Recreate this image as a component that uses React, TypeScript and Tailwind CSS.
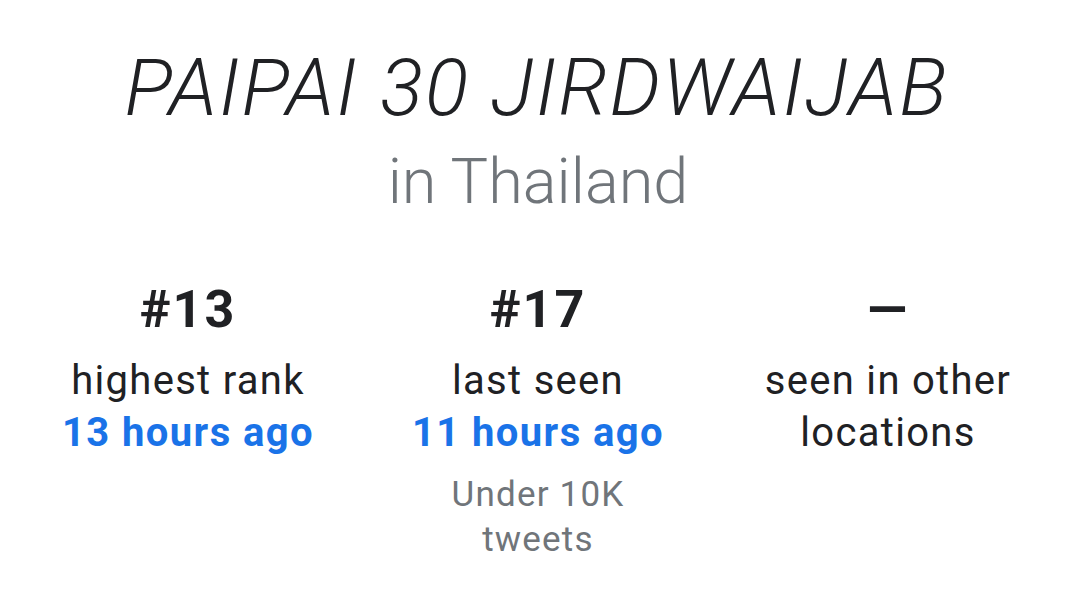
export default function App() {
  const stats = [
    { rank: "#13", label: "highest rank", when: "13 hours ago", note: "" },
    { rank: "#17", label: "last seen", when: "11 hours ago", note: "Under 10K tweets" },
    { rank: "—", label: "seen in other locations", when: "", note: "" },
  ];

  return (
    <main
      className="min-h-[590px] w-full bg-white pt-10 text-center text-[#202124]"
      style={{ fontFamily: "Roboto, 'Noto Sans', sans-serif" }}
    >
      {/* trend title */}
      <h1 className="pr-[3px] text-[80px] leading-[96px] font-light italic tracking-[1.9px]">
        PAIPAI 30 JIRDWAIJAB
      </h1>
      <p className="mt-[7px] text-[63px] leading-[77px] font-light text-[#70757a]">in Thailand</p>

      {/* stats row */}
      <div className="mt-[60px] grid grid-cols-3 px-[13px]">
        {stats.map((s) => (
          <div key={s.label} className="flex flex-col items-center px-6">
            <div className="text-[52px] leading-[60px] font-bold tracking-[2px]">{s.rank}</div>
            <div className="mt-[15px] text-[40px] leading-[52px] tracking-[1.3px]">{s.label}</div>
            {s.when && (
              <div className="text-[40px] leading-[52px] font-bold tracking-[1.4px] text-[#1a73e8]">
                {s.when}
              </div>
            )}
            {s.note && (
              <div className="mt-[13px] max-w-[220px] text-[35px] leading-[45px] tracking-[1.2px] text-[#70757a]">
                {s.note}
              </div>
            )}
          </div>
        ))}
      </div>
    </main>
  );
}
